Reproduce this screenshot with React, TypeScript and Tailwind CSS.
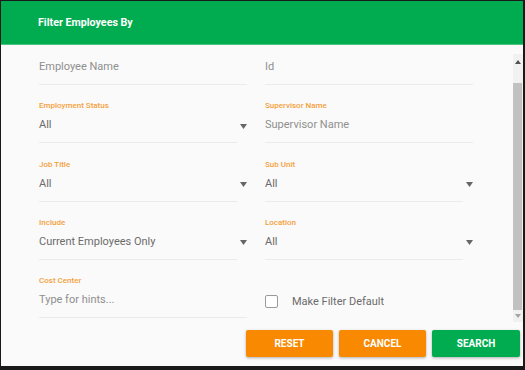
import React from "react";

const Arrow = () => (
  <svg width="7" height="5" viewBox="0 0 7 5" className="shrink-0">
    <path d="M0 0 H7 L3.5 5 Z" fill="#666" />
  </svg>
);

function Field({
  label,
  value,
  placeholder,
  select,
  first,
}: {
  label?: string;
  value: string;
  placeholder?: boolean;
  select?: boolean;
  first?: boolean;
}) {
  return (
    <div className={first ? "flex flex-col" : "flex flex-col mt-[15.3px]"}>
      {first ? (
        <div className="h-[9px]" />
      ) : (
        <div className="h-[12px] leading-[12px] text-[8px] font-medium text-[#f5a03a]">
          {label}
        </div>
      )}
      <div className="flex items-center">
        <div
          className={
            (select ? "w-[198px]" : "w-[208px]") +
            " h-[31px] border-b border-[#ebebeb] pb-[4px]"
          }
        >
          <div
            className={
              "h-[26px] leading-[26px] text-[11px] " +
              (placeholder ? "text-[#8f8f8f]" : "text-[#6b6b6b]")
            }
          >
            {value}
          </div>
        </div>
        {select && (
          <div className="ml-[3px] -mt-[3px]">
            <Arrow />
          </div>
        )}
      </div>
    </div>
  );
}

export default function App() {
  return (
    <div
      className="w-[525px] h-[370px] bg-[#1a1a1a] pl-[1px] pt-[1px] pr-[2px] pb-[4px]"
      style={{ fontFamily: "Roboto, 'Liberation Sans', sans-serif" }}
    >
      <div className="w-full h-full bg-[#fafafa] flex flex-col overflow-hidden">
        {/* header */}
        <div className="h-[44px] shrink-0 bg-[#00ac4f] border-b border-[#4cc47e] flex items-center pl-[37px] pt-[2px]">
          <div className="text-white font-bold text-[10.7px]">Filter Employees By</div>
        </div>

        {/* body */}
        <div className="flex h-[277px] shrink-0">
          <div className="flex-1 pl-[38px] grid grid-cols-[208px_208px] gap-x-[18px] content-start overflow-hidden">
            <div className="flex flex-col">
              <Field first value="Employee Name" placeholder />
              <Field label="Employment Status" value="All" select />
              <Field label="Job Title" value="All" select />
              <Field label="Include" value="Current Employees Only" select />
              <Field label="Cost Center" value="Type for hints..." placeholder />
            </div>
            <div className="flex flex-col">
              <Field first value="Id" placeholder />
              <Field label="Supervisor Name" value="Supervisor Name" placeholder />
              <Field label="Sub Unit" value="All" select />
              <Field label="Location" value="All" select />
              <div className="mt-[15px] h-[43px] flex items-center pt-[11px]">
                <div className="w-[13px] h-[13px] border border-[#9a9a9a] rounded-[2px] bg-white" />
                <div className="ml-[14px] text-[11px] text-[#6b6b6b]">Make Filter Default</div>
              </div>
            </div>
          </div>
          {/* scrollbar */}
          <div className="w-[10px] mt-[9px] h-[268px] bg-[#f1f1f1] flex flex-col items-center">
            <div className="h-[29px] w-full flex items-start justify-center pt-[6px]">
              <svg width="6" height="4" viewBox="0 0 6 4">
                <path d="M0 4 H6 L3 0 Z" fill="#505050" />
              </svg>
            </div>
            <div className="w-[9px] h-[227px] bg-[#c1c1c1] self-start" />
            <div className="flex-1 w-full flex items-center justify-center">
              <svg width="6" height="4" viewBox="0 0 6 4">
                <path d="M0 0 H6 L3 4 Z" fill="#a3a3a3" />
              </svg>
            </div>
          </div>
        </div>

        {/* buttons */}
        <div className="flex justify-end gap-[6px] pr-[3px] pt-[8px]">
          <button className="w-[87px] h-[27px] bg-[#f88900] text-white font-bold text-[10px] rounded-[2px] shadow-[0_1px_3px_rgba(0,0,0,0.3)]">
            RESET
          </button>
          <button className="w-[87px] h-[27px] bg-[#f88900] text-white font-bold text-[10px] rounded-[2px] shadow-[0_1px_3px_rgba(0,0,0,0.3)]">
            CANCEL
          </button>
          <button className="w-[88px] h-[27px] bg-[#00ac4f] text-white font-bold text-[10px] rounded-[2px] shadow-[0_1px_3px_rgba(0,0,0,0.3)]">
            SEARCH
          </button>
        </div>
      </div>
    </div>
  );
}
